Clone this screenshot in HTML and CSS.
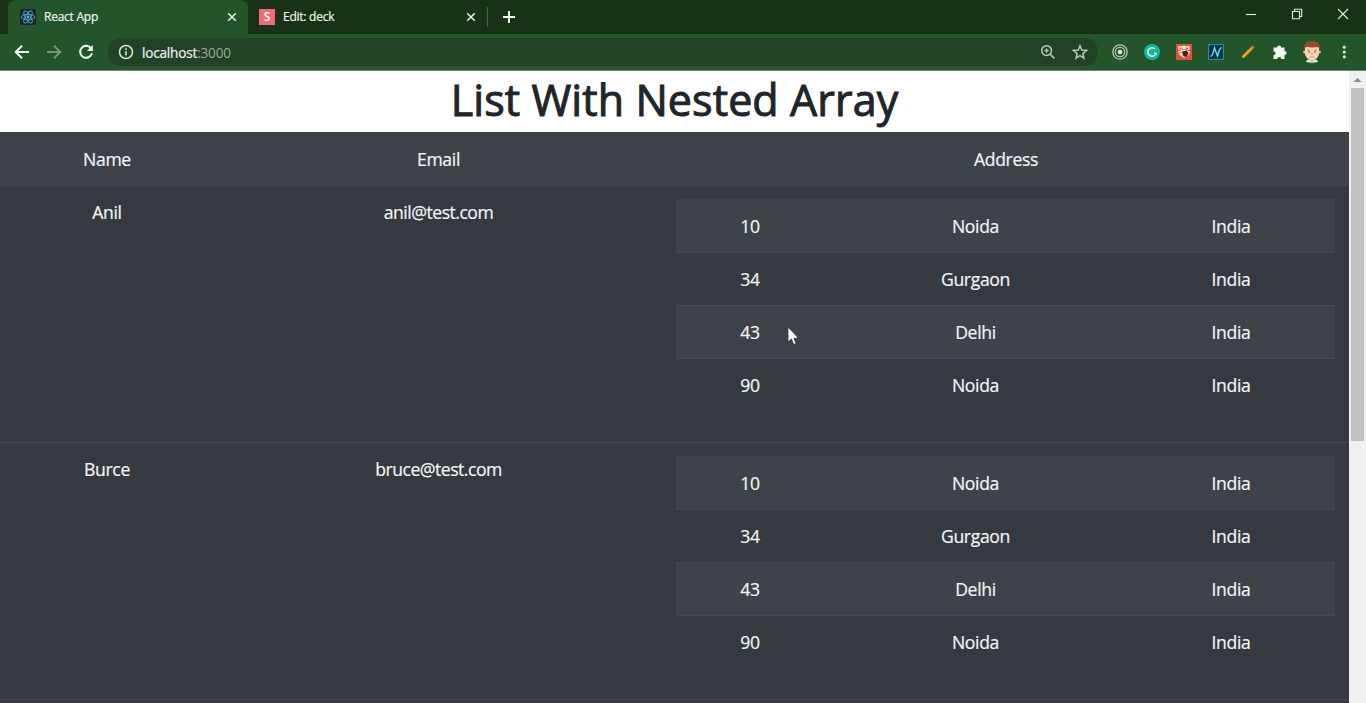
FILE: index.html
```html
<!DOCTYPE html>
<html lang="en">
<head>
<meta charset="utf-8">
<title>React App</title>
<link rel="stylesheet" href="styles.css">
</head>
<body>
<header class="chrome">
  <div class="tabstrip">
    <div class="tab tab-active">
      <svg class="favicon" viewBox="0 0 16 16"><rect width="16" height="16" rx="1" fill="#20242c"/><g fill="none" stroke="#4ba3c8" stroke-width="0.9"><ellipse cx="8" cy="8" rx="6.8" ry="2.6"/><ellipse cx="8" cy="8" rx="6.8" ry="2.6" transform="rotate(60 8 8)"/><ellipse cx="8" cy="8" rx="6.8" ry="2.6" transform="rotate(120 8 8)"/></g><circle cx="8" cy="8" r="1.4" fill="#56b5d8"/></svg>
      <span class="tab-title">React App</span>
      <svg class="tab-close" viewBox="0 0 10 10"><path d="M1.2 1.2l7.6 7.6M8.8 1.2L1.2 8.8"/></svg>
    </div>
    <div class="tab tab-idle">
      <span class="favicon favicon-s">S</span>
      <span class="tab-title">Edit: deck</span>
      <svg class="tab-close" viewBox="0 0 10 10"><path d="M1.2 1.2l7.6 7.6M8.8 1.2L1.2 8.8"/></svg>
    </div>
    <svg class="new-tab" viewBox="0 0 12 12"><path d="M6 0v12M0 6h12"/></svg>
    <div class="window-buttons">
      <svg viewBox="0 0 12 12"><path d="M1 6.5h10"/></svg>
      <svg viewBox="0 0 12 12"><path d="M1.5 3.5h7v7.2h-7zM3.5 3.5V1.3h7.2v7.2H8.5"/></svg>
      <svg viewBox="0 0 12 12"><path d="M1 1l10 10M11 1L1 11"/></svg>
    </div>
  </div>
  <div class="toolbar">
    <svg class="nav-icon" viewBox="0 0 16 16"><path d="M15 8H2M8 1.7L1.7 8 8 14.3"/></svg>
    <svg class="nav-icon nav-dim" viewBox="0 0 16 16"><path d="M1 8h13M8 1.7L14.3 8 8 14.3"/></svg>
    <svg class="nav-icon" viewBox="0 0 16 16"><path d="M13.2 4.5A6 6 0 1 0 14 9.2"/><path d="M14.8 1v6H8.8z" class="solid"/></svg>
    <div class="omnibox">
      <svg class="info" viewBox="0 0 16 16"><circle cx="8" cy="8" r="6.5"/><path d="M8 7v4.6M8 4.2v1.7"/></svg>
      <span class="url"><span class="host">localhost</span><span class="port">:3000</span></span>
      <svg class="omni-icon" viewBox="0 0 16 16"><circle cx="6.6" cy="6.6" r="4.9"/><path d="M10.2 10.2l4.2 4.2M6.6 4.5v4.2M4.5 6.6h4.2"/></svg>
      <svg class="omni-icon" viewBox="0 0 16 16"><path d="M8 1.8l1.8 4.3 4.7.4-3.6 3.1 1.1 4.6L8 11.7l-4 2.5 1.1-4.6L1.5 6.5l4.7-.4z"/></svg>
    </div>
    <div class="extensions">
      <svg viewBox="0 0 16 16"><g fill="none" stroke="#bdcbbb" stroke-width="1.3"><circle cx="8" cy="8" r="7.2"/><circle cx="8" cy="8" r="4.7"/></g><circle cx="8" cy="8" r="2.3" fill="#e3eae1"/></svg>
      <svg viewBox="0 0 16 16"><circle cx="8" cy="8" r="8" fill="#15b59a"/><path d="M11.2 5.2A4.2 4.2 0 1 0 11 11" fill="none" stroke="#d8fff4" stroke-width="1.5"/><path d="M9.4 8.8h3.2v2.8z" fill="#e8fff8"/></svg>
      <svg viewBox="0 0 16 16"><rect width="16" height="16" fill="#df5037"/><g fill="#f7ded5"><circle cx="4.2" cy="4" r="2.3"/><circle cx="8" cy="3.5" r="2.1"/><circle cx="11.8" cy="4" r="2.3"/><path d="M2 7.5Q8 4 14 7.5l-1 3-3 3H7l-4-3z"/></g><circle cx="4.6" cy="4.5" r="1" fill="#df5037"/><circle cx="11" cy="4.5" r="1" fill="#df5037"/><path d="M6 7.5l5-1 1.5 3-2.5 4-3-2z" fill="#502019"/><path d="M2.5 9.5l3-1" stroke="#df5037"/></svg>
      <svg viewBox="0 0 16 16"><rect x=".6" y=".6" width="14.8" height="14.8" fill="#062b43" stroke="#278aaa" stroke-width="1.2"/><path d="M2.5 12.3c2.2.2 3-4 4-8.5l3 8.2c1.4-4 1.8-8.3 4.2-8.3" fill="none" stroke="#60dce8" stroke-width="1.5"/></svg>
      <svg viewBox="0 0 16 16"><path d="M3.4 12.5L12 4" stroke="#f5a214" stroke-width="2.8" stroke-linecap="round"/><path d="M12 4l.8-.8" stroke="#e47733" stroke-width="2.6" stroke-linecap="round"/></svg>
      <svg viewBox="0 0 16 16"><path d="M1.5 3.6H5.1A2.1 2.1 0 1 1 9.3 3.6H12.5V6.9A2.1 2.1 0 1 1 12.5 11.1V15H9.3A2 2 0 0 0 5.3 15H1.5V11.2A2 2 0 0 0 1.5 7.2z" fill="#f3f7f2"/></svg>
      <svg class="avatar" viewBox="0 0 20 22"><path d="M4 21c0-2 2-3 6-3s6 1 6 3q-6 1.5-12 0z" fill="#d6eee9"/><path d="M7.5 16h5v4l-2.5 1-2.5-1z" fill="#e6b48f"/><circle cx="2.6" cy="11" r="1.5" fill="#edbd9b"/><circle cx="17.4" cy="11" r="1.5" fill="#edbd9b"/><path d="M3 6h14v7q-1 5-7 6.5Q4 18 3 13z" fill="#f7d5b9"/><path d="M2.3 9V5Q3 .5 9 .3q8-.3 8.8 4.5v4L16 6Q10 7 4 5.8z" fill="#944c2c"/><path d="M5 9.2h3M12 9.2h3" stroke="#8a6248" stroke-width=".7"/><circle cx="7" cy="11" r=".7" fill="#463228"/><circle cx="13" cy="11" r=".7" fill="#463228"/><path d="M7.5 15.7q2.5 1 5 0M10 11v2.6" fill="none" stroke="#c97e60" stroke-width=".7"/></svg>
      <svg viewBox="0 0 16 16"><g fill="#dbe6d9"><circle cx="8.3" cy="3.2" r="1.6"/><circle cx="8.3" cy="8" r="1.6"/><circle cx="8.3" cy="12.8" r="1.6"/></g></svg>
    </div>
  </div>
</header>
<div class="viewport">
  <main class="page">
    <h1>List With Nested Array</h1>
    <table class="users">
      <colgroup><col class="col-name"><col class="col-email"><col class="col-address"></colgroup>
      <tbody>
        <tr class="head-row"><td>Name</td><td>Email</td><td>Address</td></tr>
        <tr class="user-row">
          <td>Anil</td><td class="mail">anil@test.com</td>
          <td><table class="addresses"><colgroup><col class="col-no"><col class="col-city"><col class="col-country"></colgroup><tbody>
            <tr><td>10</td><td>Noida</td><td>India</td></tr>
            <tr><td>34</td><td>Gurgaon</td><td>India</td></tr>
            <tr><td>43</td><td>Delhi</td><td>India</td></tr>
            <tr><td>90</td><td>Noida</td><td>India</td></tr>
          </tbody></table></td>
        </tr>
        <tr class="user-row">
          <td>Burce</td><td class="mail">bruce@test.com</td>
          <td><table class="addresses"><colgroup><col class="col-no"><col class="col-city"><col class="col-country"></colgroup><tbody>
            <tr><td>10</td><td>Noida</td><td>India</td></tr>
            <tr><td>34</td><td>Gurgaon</td><td>India</td></tr>
            <tr><td>43</td><td>Delhi</td><td>India</td></tr>
            <tr><td>90</td><td>Noida</td><td>India</td></tr>
          </tbody></table></td>
        </tr>
      </tbody>
    </table>
  </main>
  <aside class="scrollbar">
    <svg class="scroll-up" viewBox="0 0 17 17"><path d="M4.5 11L8.5 7l4 4z" fill="#8b8b8b"/></svg>
    <div class="thumb"></div>
  </aside>
</div>
<svg class="cursor" viewBox="0 0 13 20"><path d="M1 1v15l3.4-3.1 2.2 5.5 2.5-1-2.2-5.2h4.6z" fill="#fff" stroke="#20242a" stroke-width=".7"/></svg>
</body>
</html>
```

FILE: styles.css
```css
* { box-sizing: border-box; }
body {
  margin: 0;
  width: 1366px;
  height: 703px;
  overflow: hidden;
  display: flex;
  flex-direction: column;
  font-family: "Open Sans", "Noto Sans", sans-serif;
  background: #343a40;
}
svg { display: block; flex: none; }

/* Browser frame */
.chrome { flex: none; height: 71px; background: #245429; border-bottom: 1px solid #6d8a70; }
.tabstrip { height: 34px; display: flex; align-items: center; background: #183218; padding-left: 8px; }
.tab { height: 34px; display: flex; align-items: center; }
.tab-active { width: 240px; padding: 0 11px 0 12px; background: #245429; border-radius: 8px 8px 0 0; }
.tab-idle { width: 240px; height: 20px; padding: 0 11px; border-right: 1px solid #48614a; }
.favicon { width: 16px; height: 16px; flex: none; }
.favicon-s { background: #ee6c75; color: #fff; font-size: 12px; line-height: 16px; text-align: center; font-weight: 600; }
.tab-title { margin: -1px 0 0 8px; font-size: 12px; color: #eef3ec; white-space: nowrap; letter-spacing: -0.25px; -webkit-text-stroke: 0.2px; }
.tab-close { width: 10px; height: 10px; margin-left: auto; fill: none; stroke: #eef3ec; stroke-width: 1.5; }
.new-tab { width: 12px; height: 12px; margin-left: 15px; fill: none; stroke: #fff; stroke-width: 1.9; }
.window-buttons { margin-left: auto; height: 28px; align-self: flex-start; display: flex; align-items: center; gap: 34px; padding-right: 17px; }
.window-buttons svg { width: 12px; height: 12px; fill: none; stroke: #e4ebe3; stroke-width: 1.1; }

.toolbar { height: 36px; display: flex; align-items: center; padding-left: 14px; }
.nav-icon { width: 16px; height: 16px; margin-right: 16px; fill: none; stroke: #f2f6f1; stroke-width: 2; }
.nav-icon .solid { fill: #f2f6f1; stroke: none; }
.nav-dim { stroke: #77947a; }
.omnibox { width: 990px; height: 28px; margin-left: -2px; border-radius: 14px; background: #224227; display: flex; align-items: center; padding: 0 10px; }
.info { width: 16px; height: 16px; fill: none; stroke: #d3ded2; stroke-width: 1.6; }
.url { margin: 0 auto 0 8px; font-size: 13.6px; letter-spacing: -0.2px; }
.host { color: #f0f5ef; -webkit-text-stroke: 0.2px; }
.port { color: #98aa99; }
.omni-icon { width: 16px; height: 16px; margin-left: 16px; fill: none; stroke: #b9c8b9; stroke-width: 1.5; }
.extensions { display: flex; align-items: center; gap: 16px; margin-left: 14px; }
.extensions svg { width: 16px; height: 16px; }
.extensions .avatar { width: 20px; height: 22px; margin: 0 -2px; }

/* Page */
.viewport { flex: 1; min-height: 0; display: flex; }
.page { width: 1349px; background: #343a40; overflow: hidden; }
h1 { margin: 0; height: 61px; line-height: 57px; font-size: 43px; font-weight: 400; color: #212529; background: #fff; text-align: center; letter-spacing: 0.1px; -webkit-text-stroke: 1px #212529; }
table { border-collapse: separate; border-spacing: 0; table-layout: fixed; width: 100%; }
td { padding: 0; vertical-align: top; }
.users { color: #f4f5f6; font-size: 17.6px; line-height: 26px; text-align: center; letter-spacing: -0.35px; -webkit-text-stroke: 0.2px; }
.users .mail { letter-spacing: -0.5px; }
.col-name { width: 214px; }
.col-email { width: 449px; }
.col-address { width: 686px; }
.head-row { height: 54px; }
.head-row td { padding-top: 14px; background: #3e4349; border-bottom: 1px solid #42474e; }
.user-row { height: 257px; }
.user-row > td { padding-top: 13px; border-bottom: 1px solid #444a51; }
.user-row > td:last-child { padding: 13px 14px 0 13px; }
.user-row .addresses td { padding-top: 14px; border: 0; }
.col-no { width: 148px; }
.col-city { width: 303px; }
.col-country { width: 208px; }
.addresses tr { height: 53px; }
.addresses tr:nth-child(odd) { height: 54px; background: #3e4349; }
.addresses tr:nth-child(2) { height: 52px; }
.user-row .addresses tr:nth-child(odd) td { border-bottom: 1px solid #444a51; }
.user-row .addresses tr:nth-child(3) td { padding-top: 13px; border-top: 1px solid #454b52; }
.user-row .addresses tr:nth-child(2) td,
.user-row .addresses tr:nth-child(4) td { padding-top: 13px; }

.scrollbar { width: 17px; background: #f1f1f1; display: flex; flex-direction: column; align-items: center; }
.scroll-up { width: 17px; height: 17px; }
.thumb { width: 13px; height: 353px; background: #c1c1c1; }

.cursor { position: absolute; left: 787px; top: 326px; width: 13px; height: 20px; }
```
